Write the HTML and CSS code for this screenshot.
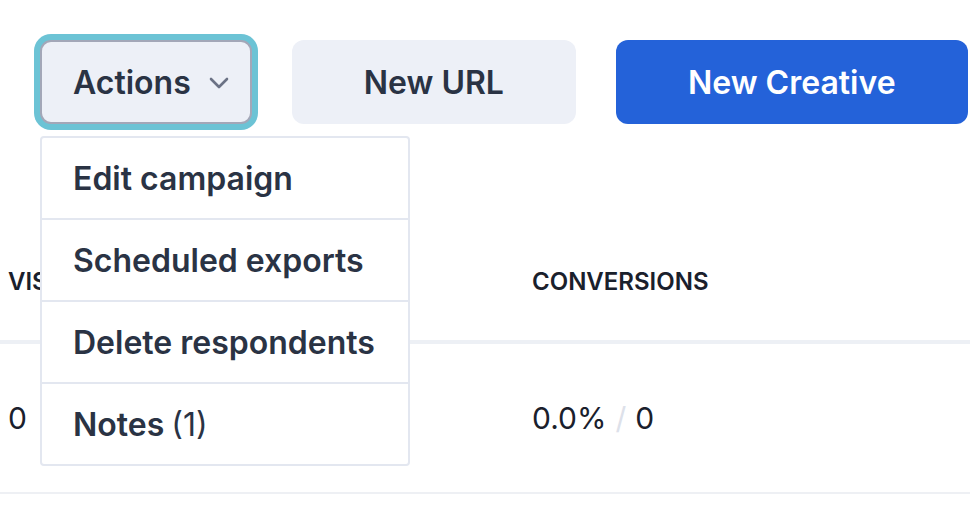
FILE: index.html
```html
<!DOCTYPE html>
<html>
<head>
<meta charset="utf-8">
<link rel="stylesheet" href="styles.css">
</head>
<body>
<div class="toolbar">
  <div class="actions-wrap">
    <button class="btn btn-actions">Actions
      <svg class="chev" width="20" height="12" viewBox="0 0 20 12"><path d="M2 2 L10 10 L18 2" fill="none" stroke="#6b7285" stroke-width="2.6" stroke-linecap="round" stroke-linejoin="round"/></svg>
    </button>
    <div class="menu">
      <div class="menu-item">Edit campaign</div>
      <div class="menu-item">Scheduled exports</div>
      <div class="menu-item">Delete respondents</div>
      <div class="menu-item">Notes <span class="count">(1)</span></div>
    </div>
  </div>
  <button class="btn btn-light">New URL</button>
  <button class="btn btn-primary">New Creative</button>
</div>
<div class="table">
  <div class="th">Visits</div>
  <div class="th">Conversions</div>
  <div class="td">0</div>
  <div class="td">0.0%<span class="sep">/</span>0</div>
</div>
</body>
</html>
```
FILE: styles.css
```css
html, body {
  margin: 0;
  padding: 0;
  background: #ffffff;
}
body {
  font-family: Inter, "Noto Sans", sans-serif;
  color: #1a202c;
  width: 970px;
  overflow: hidden;
}
.toolbar {
  display: flex;
  gap: 40px;
  padding: 40px 0 0 40px;
}
.actions-wrap {
  position: relative;
}
.btn {
  font-family: Inter, "Noto Sans", sans-serif;
  font-size: 32px;
  font-weight: 600;
  height: 84px;
  border-radius: 12px;
  border: none;
  padding: 0 72px;
  display: flex;
  align-items: center;
  white-space: nowrap;
  cursor: pointer;
}
.btn-actions {
  background: #edf0f7;
  color: #2a3344;
  border: 2px solid #a3a7b8;
  padding: 0 21px 0 31px;
  box-shadow: 0 0 0 6px #6cc3d5;
  border-radius: 11px;
}
.chev {
  margin-left: 18px;
  margin-top: 2px;
}
.btn-light {
  background: #edf0f7;
  color: #2a3344;
}
.btn-primary {
  background: #2462d9;
  color: #ffffff;
}
.menu {
  position: absolute;
  top: 96px;
  left: 0;
  width: 366px;
  background: #ffffff;
  border: 2px solid #e3e7f0;
  border-radius: 4px;
  z-index: 5;
}
.menu-item {
  height: 80px;
  display: flex;
  align-items: center;
  padding-left: 31px;
  font-size: 32px;
  font-weight: 600;
  color: #2a3344;
  white-space: nowrap;
}
.menu-item + .menu-item {
  border-top: 2px solid #e3e7f0;
}
.count {
  font-weight: 400;
  margin-left: 7px;
}
.table {
  display: grid;
  grid-template-columns: 524px 1fr;
  margin-top: 100px;
}
.th {
  padding: 43px 8px;
  font-size: 24px;
  line-height: 30px;
  font-weight: 600;
  text-transform: uppercase;
  border-bottom: 4px solid #edf0f5;
  color: #1a202c;
}
.td {
  padding: 56px 8px;
  font-size: 30px;
  line-height: 36px;
  font-weight: 400;
  border-bottom: 2px solid #eef0f4;
  color: #1a202c;
}
.sep {
  color: #dde1ea;
  margin: 0 9px;
}
```
